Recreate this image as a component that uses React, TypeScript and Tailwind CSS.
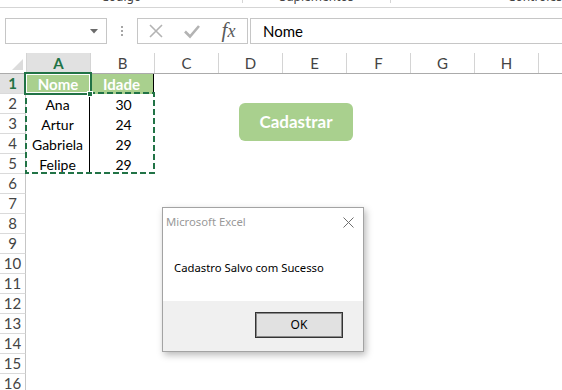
import React from 'react';

const cols = ['A', 'B', 'C', 'D', 'E', 'F', 'G', 'H'];
const rows = Array.from({ length: 17 }, (_, i) => i + 1);
const data: Record<number, [string, string]> = {
  2: ['Ana', '30'],
  3: ['Artur', '24'],
  4: ['Gabriela', '29'],
  5: ['Felipe', '29'],
};

export default function App() {
  return (
    <div className="relative w-[562px] h-[390px] overflow-hidden bg-white font-['Lato',sans-serif] text-black">
      {/* Ribbon group labels (cut off) */}
      <div className="h-[8px] border-b border-[#d5d5d5] overflow-hidden flex text-[12px] text-[#444] font-['Noto_Sans',sans-serif]">
        <div className="w-[258px] flex justify-center">
          <span className="leading-[14px] -mt-[10px]">Código</span>
        </div>
        <div className="w-px h-[3px] bg-[#d5d5d5]" />
        <div className="w-[156px] flex justify-center">
          <span className="leading-[14px] -mt-[10px]">Suplementos</span>
        </div>
        <div className="w-px h-[3px] bg-[#d5d5d5]" />
        <div className="flex-1 pl-[117px] whitespace-nowrap">
          <span className="leading-[14px] -mt-[10px] block">Controles</span>
        </div>
      </div>

      {/* Formula bar */}
      <div className="mt-[10px] h-[26px] flex items-stretch">
        <div className="ml-[5px] w-[102px] border border-[#c6c6c6] bg-white flex items-center justify-end pr-[8px]">
          <svg width="8" height="5" viewBox="0 0 8 5">
            <path d="M0 0 L8 0 L4 4.5 Z" fill="#6b6b6b" />
          </svg>
        </div>
        <div className="w-[30px] flex flex-col items-center justify-center gap-[2px]">
          <div className="w-[2px] h-[2px] bg-[#a6a6a6]" />
          <div className="w-[2px] h-[2px] bg-[#a6a6a6]" />
          <div className="w-[2px] h-[2px] bg-[#a6a6a6]" />
        </div>
        <div className="w-[111px] border border-[#c6c6c6] flex items-center">
          <div className="w-[36px] flex justify-center">
            <svg width="16" height="16" viewBox="0 0 16 16">
              <path d="M2 2 L14 14 M14 2 L2 14" stroke="#b3b3b3" strokeWidth="1.6" fill="none" />
            </svg>
          </div>
          <div className="w-[36px] flex justify-center">
            <svg width="18" height="16" viewBox="0 0 18 16">
              <path d="M2 8.5 L7 13.5 L16 3" stroke="#b3b3b3" strokeWidth="2.6" fill="none" />
            </svg>
          </div>
          <div className="flex-1 flex justify-center">
            <span className="font-['Liberation_Serif',serif] italic text-[21px] leading-none text-[#5a5a5a] -mt-[2px]">
              f<span className="text-[18px]">x</span>
            </span>
          </div>
        </div>
        <div className="ml-[2px] flex-1 border border-r-0 border-[#c6c6c6] flex items-center pl-[12px] text-[15px] text-black">
          Nome
        </div>
      </div>

      {/* Sheet */}
      <div className="mt-[9px]">
        {/* Column headers */}
        <div className="flex h-[21px] border-b border-[#ababab]">
          <div className="w-[26px] relative">
            <svg className="absolute right-[3px] bottom-[3px]" width="11" height="11" viewBox="0 0 11 11">
              <path d="M11 0 L11 11 L0 11 Z" fill="#dcdcdc" />
            </svg>
          </div>
          {cols.map((c) => (
            <div
              key={c}
              className={
                c === 'A'
                  ? 'w-[64px] border-l border-[#d4d4d4] bg-[#e1e1e1] flex items-center justify-center text-[15px] font-bold text-[#217346]'
                  : 'w-[64px] border-l border-[#d4d4d4] flex items-center justify-center text-[15px] text-[#444]'
              }
            >
              {c}
            </div>
          ))}
          <div className="flex-1 border-l border-[#d4d4d4]" />
        </div>

        {/* Rows */}
        {rows.map((r) => (
          <div key={r} className="flex h-[20px]">
            <div
              className={
                r === 1
                  ? 'w-[26px] shrink-0 border-r border-b border-r-[#c6c6c6] border-b-[#dadada] bg-[#e1e1e1] flex items-center justify-center text-[15px] font-bold text-[#217346]'
                  : 'w-[26px] shrink-0 border-r border-b border-r-[#c6c6c6] border-b-[#dadada] flex items-center justify-center text-[15px] text-[#444]'
              }
            >
              {r}
            </div>
            {r === 1 ? (
              <>
                <div className="w-[64px] bg-[#a9d08e] flex items-center justify-center text-[15px] font-bold text-white">
                  Nome
                </div>
                <div className="w-[64px] bg-[#a9d08e] border-r border-black flex items-center justify-center text-[15px] font-bold text-white">
                  Idade
                </div>
              </>
            ) : data[r] ? (
              <>
                <div className="w-[64px] border-r border-black flex items-center justify-center text-[14px]">
                  {data[r][0]}
                </div>
                <div className="w-[64px] flex items-center justify-center text-[14px] pl-[3px]">{data[r][1]}</div>
              </>
            ) : null}
          </div>
        ))}
      </div>

      {/* Copy range marching ants */}
      <svg className="absolute left-[25px] top-[92px]" width="130" height="82" viewBox="0 0 130 82">
        <rect x="1" y="1" width="128" height="80" fill="none" stroke="#217346" strokeWidth="2" strokeDasharray="6 3" />
      </svg>

      {/* Selected cell A1 */}
      <div className="absolute left-[24px] top-[72px] w-[68px] h-[23px] border-2 border-[#217346]">
        <div className="w-full h-full border border-white" />
      </div>
      <div className="absolute left-[87px] top-[91px] w-[6px] h-[6px] bg-[#217346] border border-white" />

      {/* Cadastrar shape */}
      <div className="absolute left-[239px] top-[103px] w-[114px] h-[38px] rounded-[6px] bg-[#a9d08e] flex items-center justify-center text-white font-bold text-[17px]">
        Cadastrar
      </div>

      {/* Message box */}
      <div className="absolute left-[162px] top-[207px] w-[202px] h-[145px] border border-[#a3a3a3] bg-white flex flex-col shadow-[2px_3px_7px_rgba(0,0,0,0.28)] font-['Noto_Sans',sans-serif]">
        <div className="h-[28px] flex items-center justify-between pl-[3px] pr-[9px]">
          <span className="text-[11.3px] text-[#999999]">Microsoft Excel</span>
          <svg width="11" height="11" viewBox="0 0 11 11">
            <path d="M0.5 0.5 L10.5 10.5 M10.5 0.5 L0.5 10.5" stroke="#6e6e6e" strokeWidth="1" fill="none" />
          </svg>
        </div>
        <div className="h-[65px] flex items-center pl-[11px] text-[11.3px] text-black">Cadastro Salvo com Sucesso</div>
        <div className="flex-1 bg-[#f0f0f0] flex justify-end items-start pt-[11px] pr-[20px]">
          <div className="w-[88px] h-[26px] border border-[#333] bg-[#e1e1e1] flex items-center justify-center text-[12px] text-black shadow-[inset_0_0_0_1px_#8a8a8a]">
            OK
          </div>
        </div>
      </div>
    </div>
  );
}
